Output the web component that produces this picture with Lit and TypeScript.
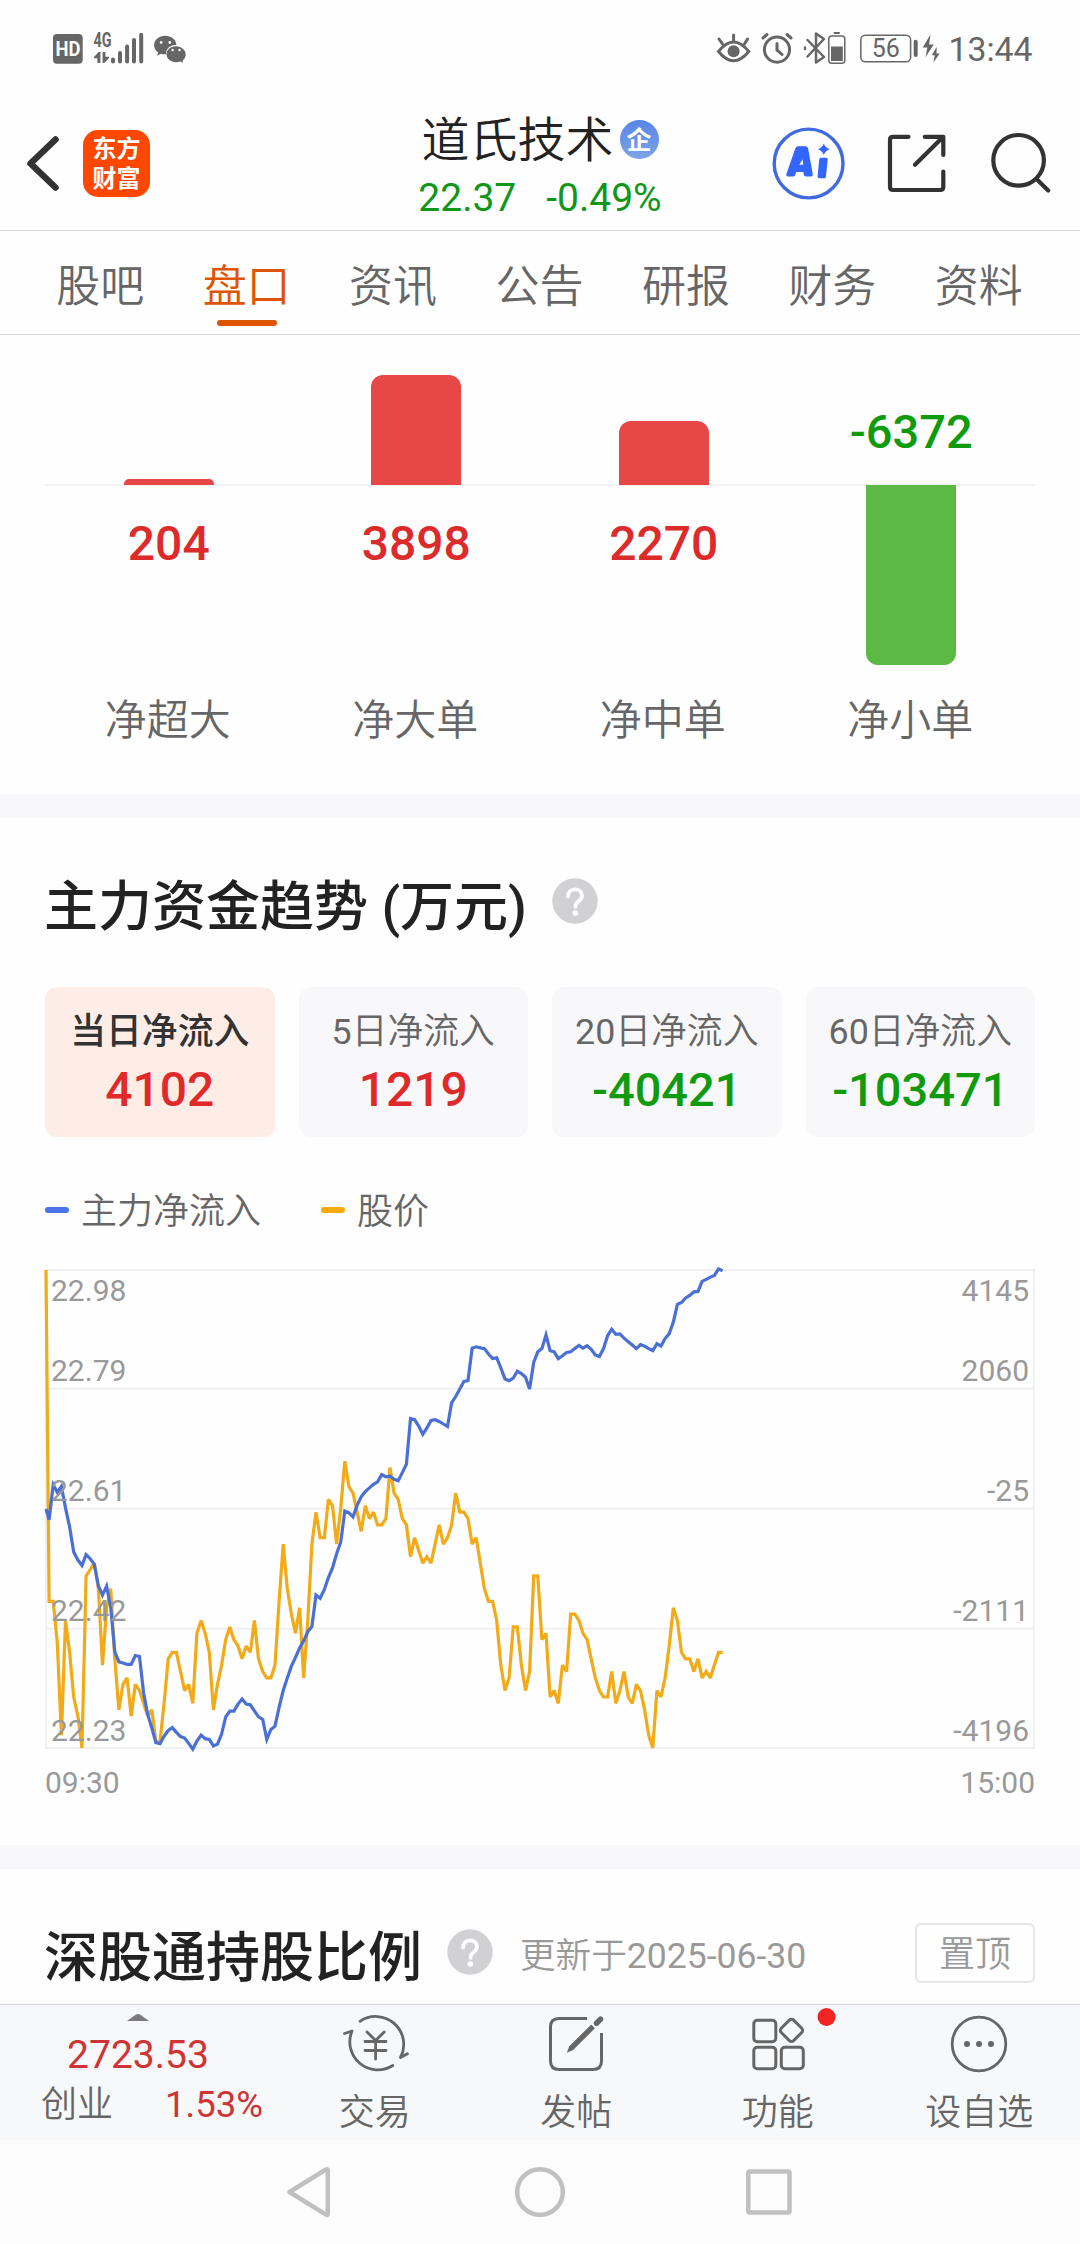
import { LitElement, html, css, svg } from "lit";
import { customElement } from "lit/decorators.js";

const tabs = ["股吧", "盘口", "资讯", "公告", "研报", "财务", "资料"];

const orders = [
  { label: "净超大", value: 204 },
  { label: "净大单", value: 3898 },
  { label: "净中单", value: 2270 },
  { label: "净小单", value: -6372 },
];
const ORDER_SCALE = 180 / 6372;

const periods = [
  { label: "当日净流入", value: 4102 },
  { label: "5日净流入", value: 1219 },
  { label: "20日净流入", value: -40421 },
  { label: "60日净流入", value: -103471 },
];

const axis = [
  { price: "22.98", flow: "4145" },
  { price: "22.79", flow: "2060" },
  { price: "22.61", flow: "-25" },
  { price: "22.42", flow: "-2111" },
  { price: "22.23", flow: "-4196" },
];

// Cents below the day's high of 22.98, one sample a minute.
const priceDrop = [
  0, 52, 52, 58.5, 73, 55, 60, 67, 70, 75, 48, 47, 46, 50, 62, 53, 50, 61, 69, 65, 64, 70, 65, 66, 68, 70, 69, 74, 74,
  68, 61, 60, 60, 63, 66, 65, 68, 57, 55, 57, 60, 69, 65, 62, 58, 56, 58, 59, 61, 59, 60, 55, 61, 63, 64, 64, 62, 52,
  43, 50, 54, 57, 53, 64, 55, 43, 38, 42, 42, 36, 37, 43, 37.5, 30, 34, 35, 38, 41, 37, 39, 38, 40, 40, 39, 31, 35, 36,
  39, 40, 45, 42, 44, 46, 45, 46, 43, 40, 43, 42, 40, 35, 38, 38, 39, 43, 42, 46, 50, 52, 52, 55, 62, 66, 64, 56, 56,
  62, 66, 63, 48, 48, 58, 57, 67, 66, 68, 62, 63, 54, 54, 55, 57, 58, 61, 64, 66, 67, 67, 63, 68, 66, 63, 67, 68, 65,
  66, 69, 73, 75, 66, 67, 64, 59, 53, 55, 60, 61, 61, 63, 61, 64, 63, 64, 62, 60, 60,
];

// Net inflow, in plot units between FLOW_TOP and FLOW_BOTTOM, one sample a minute.
const FLOW_TOP = 56;
const FLOW_BOTTOM = 1394;
const flow = [
  725, 755, 657, 678, 662, 722, 775, 845, 868, 883, 853, 864, 880, 940, 966, 941, 1000, 1125, 1153, 1156, 1160, 1160,
  1135, 1138, 1240, 1300, 1338, 1379, 1382, 1361, 1345, 1337, 1350, 1362, 1366, 1381, 1397, 1375, 1358, 1368, 1370,
  1388, 1383, 1355, 1307, 1291, 1291, 1271, 1257, 1271, 1273, 1290, 1307, 1314, 1370, 1342, 1333, 1280, 1233, 1198,
  1165, 1140, 1114, 1094, 1068, 1054, 966, 975, 951, 917, 890, 850, 818, 731, 736, 747, 715, 691, 676, 666, 656, 649,
  629, 635, 633, 642, 646, 623, 600, 472, 475, 493, 516, 498, 477, 475, 480, 487, 494, 428, 410, 389, 368, 366, 275,
  271, 274, 276, 291, 304, 302, 330, 361, 366, 359, 339, 346, 356, 389, 315, 285, 276, 238, 282, 285, 304, 296, 287,
  285, 276, 267, 275, 268, 278, 294, 298, 276, 240, 222, 236, 235, 247, 257, 266, 276, 265, 269, 276, 282, 262, 269,
  248, 234, 202, 152, 147, 134, 127, 117, 116, 88, 82, 76, 71, 53, 58,
];

const PLOT_H = 478;
const line = (values: number[], top: number, bottom: number) =>
  values
    .map((v, i) => {
      const x = Math.max(0, i * 4.1067 - 1) + 1;
      const y = ((v - top) / (bottom - top)) * PLOT_H + 1;
      return `${x.toFixed(1)},${y.toFixed(1)}`;
    })
    .join(" ");

const base = css`
  * {
    box-sizing: border-box;
  }
  svg {
    display: block;
    flex: none;
  }
`;

@customElement("status-bar")
class StatusBar extends LitElement {
  static styles = [
    base,
    css`
      :host {
        display: block;
        height: 100px;
      }
      .bar {
        display: flex;
        justify-content: space-between;
        height: 100px;
      }
      .glyph {
        font-family: Roboto, sans-serif;
        fill: #666;
      }
      .hd {
        font-family: Roboto, sans-serif;
        font-weight: 700;
        fill: #fff;
      }
    `,
  ];
  render() {
    return html`<div class="bar">
      <svg width="200" height="100" viewBox="0 0 200 100" fill="#666">
        <rect x="53" y="34" width="29.700" height="29.700" rx="4" />
        <text class="hd" x="55.500" y="56" font-size="20" textLength="25" lengthAdjust="spacingAndGlyphs">HD</text>
        <text class="glyph" x="93.500" y="46.700" font-weight="700" font-size="20" textLength="18" lengthAdjust="spacingAndGlyphs">4G</text>
        <path d="M100.400 52v11h-3v-4.800H94V57l4.600-5zM102.600 52h2.800v4.800h3.600v1.200l-4.600 5h-1.800z" />
        <g stroke="#666" stroke-width="4" stroke-linecap="round">
          <path d="M113 59.500v2M120 53v8.500M127.100 46.500v15M134 40v21.500M141.200 34.800v26.700" />
        </g>
        <path d="M165.300 35.800c6.200 0 11 4 11 9.300-5.800-.4-10.400 3.600-10.300 9.100-1.900.2-3.700.1-5.200-.4l-3.600 2 .9-3.300c-2.600-1.900-4-4.300-4-7.200 0-5.400 5-9.500 11.200-9.500z" />
        <path d="M176.100 46.300c5.400 0 9.600 3.700 9.600 8.200 0 2.500-1.300 4.700-3.200 6.200l.7 2.100-3-1.400c-1.200.5-2.700.8-4.100.8-5.400 0-9.600-3.500-9.600-7.900s4.200-8 9.600-8z" />
        <g fill="#fff">
          <circle cx="161.200" cy="42.500" r="1.400" /><circle cx="169.800" cy="42.500" r="1.400" />
          <circle cx="172.600" cy="50" r="1.200" /><circle cx="179.500" cy="50" r="1.200" />
        </g>
      </svg>
      <svg width="380" height="100" viewBox="700 0 380 100" fill="none" stroke="#666" stroke-linecap="round">
        <g stroke-width="3">
          <path d="M718.500 51.500q15-19 30.300 0q-15.300 18.500-30.300 0z" />
          <path d="M733.600 41v-6M722.500 44l-3.500-5M744.500 44l3-5" />
        </g>
        <circle cx="733.600" cy="51.300" r="6" fill="#666" stroke="none" />
        <circle cx="777" cy="49.600" r="12.600" stroke-width="3" />
        <path d="M777 43.500v6.500l5 4.500M763 38l4-3.500M791 38l-4-3.500" stroke-width="3" />
        <path d="M807.500 40l16.500 17-8 5.500V33.500l8 5.500-16.500 17.500M805 47.500v1.500" stroke-width="2.500" stroke-linejoin="round" />
        <rect x="828.800" y="36" width="16" height="27.300" rx="3" stroke-width="1.500" />
        <path d="M834.500 33h4.500" stroke-width="2" />
        <rect x="831" y="46.500" width="11.800" height="14.500" fill="#666" stroke="none" />
        <rect x="860.800" y="35.200" width="49.800" height="26.500" rx="4.500" stroke-width="1.500" />
        <path d="M915.700 41.800v13.200" stroke-width="4" />
        <path d="M930.500 34.500l-7.800 13h4.600l-1.800 9.500 8.300-12.500h-4.700zM936.700 47l-5 8.200h3l-1.200 7.200 6.200-9h-3.200z" fill="#666" stroke="none" />
        <text class="glyph" x="885.800" y="57" text-anchor="middle" font-size="25" stroke="none">56</text>
        <text class="glyph" x="948.500" y="61.300" font-size="34" stroke="none" textLength="84" lengthAdjust="spacingAndGlyphs">13:44</text>
      </svg>
    </div>`;
  }
}

@customElement("stock-header")
class StockHeader extends LitElement {
  static styles = [
    base,
    css`
      :host {
        display: block;
      }
      .bar {
        display: grid;
        grid-template-columns: 1fr auto 1fr;
        height: 131px;
        border-bottom: 1px solid #d3d3d3;
      }
      .left {
        display: flex;
        align-items: flex-start;
        padding: 30px 0 0 25px;
        gap: 21px;
      }
      .back {
        margin-top: 2px;
      }
      .logo {
        width: 67px;
        height: 67px;
        padding-top: 2px;
        border-radius: 15px;
        background: #fe4800;
        color: #fff;
        font-family: "Noto Sans CJK SC", sans-serif;
        font-size: 24px;
        font-weight: 700;
        line-height: 30px;
        text-align: center;
      }
      .mid {
        padding-top: 8px;
      }
      .name {
        display: flex;
        align-items: center;
        justify-content: center;
        gap: 6px;
        height: 56px;
        font-size: 48px;
        color: #222;
      }
      .badge {
        width: 39px;
        height: 39px;
        margin-top: 6px;
        border-radius: 50%;
        background: linear-gradient(#5985e6, #7ba4e8);
        color: #fff;
        font-family: "Noto Sans CJK SC", sans-serif;
        font-size: 25px;
        font-weight: 700;
        line-height: 37px;
        text-align: center;
      }
      .quote {
        display: flex;
        justify-content: center;
        gap: 30px;
        height: 60px;
        padding-top: 4px;
        font-size: 39px;
        line-height: 60px;
        color: #109618;
      }
      .right {
        display: flex;
        justify-content: flex-end;
      }
    `,
  ];
  render() {
    return html`<div class="bar">
      <div class="left">
        <svg class="back" width="37" height="62" viewBox="25 132 37 62" fill="none" stroke="#333" stroke-width="6.500" stroke-linecap="round" stroke-linejoin="round">
          <path d="M55.500 139.500L30.500 163.500L55.500 187.500" />
        </svg>
        <div class="logo">东方<br />财富</div>
      </div>
      <div class="mid">
        <div class="name"><span>道氏技术</span><span class="badge">企</span></div>
        <div class="quote"><span>22.37</span><span>-0.49%</span></div>
      </div>
      <div class="right">
        <svg width="320" height="128" viewBox="760 100 320 128" fill="none">
          <circle cx="808.600" cy="163.500" r="34.400" stroke="#4169e1" stroke-width="3.400" />
          <g fill="#3366ff">
            <path fill-rule="evenodd" d="M786.300 174.200l9-25.700q.8-2.300 3-2.300h7.200q2.200 0 2.600 2.300l4.700 25.700q.4 2.300-1.800 2.300h-5q-1.800 0-2.200-1.800l-.4-2.700h-7.200l-1.200 3.200q-.5 1.300-2.200 1.300h-5q-2 0-1.500-2.300zM799.300 164.800h4l-.8-5.500z" />
            <path d="M820.700 157.700h5.500q1.700 0 1.500 1.700l-1.800 17.300q-.2 1.600-1.800 1.600h-5q-1.700 0-1.500-1.700l1.600-17.200q.2-1.700 1.500-1.700z" />
            <path d="M823.800 143.500q1.600 4.200 5.700 5.800-4.100 1.600-5.700 5.800-1.600-4.200-5.700-5.800 4.100-1.600 5.700-5.800z" />
          </g>
          <g stroke="#333" stroke-width="4.200" stroke-linecap="round" stroke-linejoin="round">
            <path d="M908.500 136.800H893q-3 0-3 3V187q0 3 3 3h47.300q3 0 3-3V171.500" />
            <path d="M924.800 136.800h18.500V155M942 138L915 164.700" />
            <circle cx="1018.600" cy="160.300" r="25.300" />
            <path d="M1037.500 180l10.700 10.500" />
          </g>
        </svg>
      </div>
    </div>`;
  }
}

@customElement("section-tabs")
class SectionTabs extends LitElement {
  static styles = [
    base,
    css`
      :host {
        display: block;
      }
      .tabs {
        display: grid;
        grid-template-columns: repeat(7, 1fr);
        height: 104px;
        padding: 0 28px 0 27px;
        border-bottom: 1px solid #d3d3d3;
      }
      .tab {
        display: flex;
        flex-direction: column;
        align-items: center;
        padding-top: 24px;
        font-size: 44px;
        line-height: 64px;
        color: #666;
      }
      .tab.on {
        color: #dd5500;
      }
      .tab.on::after {
        content: "";
        width: 60px;
        height: 6px;
        margin-top: 1px;
        border-radius: 3px;
        background: #dd5500;
      }
    `,
  ];
  render() {
    return html`<div class="tabs">
      ${tabs.map((t) => html`<div class="tab ${t === "盘口" ? "on" : ""}">${t}</div>`)}
    </div>`;
  }
}

@customElement("order-bars")
class OrderBars extends LitElement {
  static styles = [
    base,
    css`
      :host {
        display: block;
      }
      .cols {
        display: grid;
        grid-template-columns: repeat(4, 1fr);
        height: 459px;
        padding: 0 45px;
      }
      .col {
        display: flex;
        flex-direction: column;
        align-items: center;
      }
      .up {
        display: flex;
        flex-direction: column;
        justify-content: flex-end;
        align-items: center;
        width: 100%;
        height: 151px;
        border-bottom: 2px solid #f2f2f2;
      }
      .down {
        display: flex;
        flex-direction: column;
        align-items: center;
        height: 205px;
      }
      .bar {
        width: 90px;
      }
      .bar.pos {
        margin-bottom: -1px;
        border-radius: 12px 12px 0 0;
        background: #e84748;
      }
      .bar.neg {
        margin-top: -1px;
        border-radius: 0 0 12px 12px;
        background: #5cb944;
      }
      .bar.tiny {
        border-radius: 5px 5px 0 0;
      }
      .num {
        font-size: 48px;
        font-weight: 500;
        line-height: 60px;
        color: #dd2b2b;
      }
      .down .num {
        margin-top: 28px;
      }
      .up .num {
        margin-bottom: 22px;
        font-size: 47px;
        color: #109b0d;
      }
      .label {
        margin-right: 2px;
        font-size: 42px;
        line-height: 60px;
        color: #666;
      }
    `,
  ];
  render() {
    return html`<div class="cols">
      ${orders.map((o) => {
        const h = Math.abs(o.value) * ORDER_SCALE;
        return html`<div class="col">
          <div class="up">
            ${o.value > 0
              ? html`<div class="bar pos ${h < 12 ? "tiny" : ""}" style="height:${h}px"></div>`
              : html`<div class="num">${o.value}</div>`}
          </div>
          <div class="down">
            ${o.value > 0
              ? html`<div class="num">${o.value}</div>`
              : html`<div class="bar neg" style="height:${h}px"></div>`}
          </div>
          <div class="label">${o.label}</div>
        </div>`;
      })}
    </div>`;
  }
}

@customElement("help-dot")
class HelpDot extends LitElement {
  static styles = [
    base,
    css`
      :host {
        display: block;
        flex: none;
      }
    `,
  ];
  render() {
    return html`<svg width="46" height="46" viewBox="0 0 46 46" fill="none">
      <circle cx="23" cy="23" r="22.700" fill="#d1d1d4" />
      <path d="M16 18.500c0-4.300 2.800-7.200 7-7.200s7 2.600 7 6.500c0 5-6.500 5.200-6.500 11" stroke="#fff" stroke-width="3.800" stroke-linecap="round" />
      <circle cx="23.300" cy="35" r="2.800" fill="#fff" />
    </svg>`;
  }
}

@customElement("trend-chart")
class TrendChart extends LitElement {
  static styles = [
    base,
    css`
      :host {
        display: block;
        color: #999;
        font-size: 30px;
        line-height: 40px;
      }
      .plot {
        position: relative;
        height: 480px;
      }
      .labels {
        position: absolute;
        inset: 0;
        display: flex;
        flex-direction: column;
        justify-content: space-between;
        padding: 2px 6px 0 6px;
      }
      .row {
        display: flex;
        justify-content: space-between;
      }
      .row.first {
        margin-bottom: -40px;
      }
      .rest {
        display: flex;
        flex-direction: column;
        gap: 80px;
        margin-bottom: -2px;
      }
      .times {
        display: flex;
        justify-content: space-between;
        padding-top: 14px;
      }
    `,
  ];
  render() {
    const [first, ...rest] = axis;
    const row = (a: { price: string; flow: string }, cls = "") =>
      html`<div class="row ${cls}"><span>${a.price}</span><span>${a.flow}</span></div>`;
    return html`<div class="plot">
        <svg width="990" height="480" viewBox="0 0 990 480" fill="none" overflow="visible">
          <rect x="1" y="1" width="988" height="478" stroke="#f0f0f0" stroke-width="2" />
          ${[119.7, 239.7, 359.7].map((y) => svg`<path d="M0 ${y}H990" stroke="#f0f0f0" stroke-width="2"/>`)}
          <polyline points=${line(priceDrop, 0, 75)} stroke="#f2aa18" stroke-width="3.200" stroke-miterlimit="2" />
          <polyline points=${line(flow, FLOW_TOP, FLOW_BOTTOM)} stroke="#4a70d6" stroke-width="3.200" />
        </svg>
        <div class="labels">
          ${row(first, "first")}
          <div class="rest">${rest.map((a) => row(a))}</div>
        </div>
      </div>
      <div class="times"><span>09:30</span><span>15:00</span></div>`;
  }
}

@customElement("bottom-bar")
class BottomBar extends LitElement {
  static styles = [
    base,
    css`
      :host {
        display: block;
      }
      .bar {
        display: grid;
        grid-template-columns: 274px repeat(4, 1fr);
        height: 136px;
        border-top: 1px solid #d0d0d8;
        background: #f7f8fa;
      }
      .index {
        display: flex;
        flex-direction: column;
        align-items: center;
        padding: 9px 0 0 2px;
        color: #cf3333;
      }
      .price {
        margin-top: 7px;
        font-size: 39px;
        line-height: 54px;
      }
      .line {
        display: flex;
        justify-content: space-between;
        width: 100%;
        padding: 0 11px 0 39px;
        font-size: 36.500px;
        line-height: 46px;
      }
      .market {
        font-size: 36px;
        color: #666;
      }
      .item {
        display: flex;
        flex-direction: column;
        align-items: center;
        font-size: 36px;
        line-height: 48px;
        color: #666;
      }
      .item span {
        margin-top: 4px;
      }
      .nav {
        height: 104px;
        background: #fcfcfc;
      }
    `,
  ];
  render() {
    return html`<div class="bar">
        <div class="index">
          <svg width="22" height="7" viewBox="0 0 22 7" fill="#7a7a7c"><path d="M0 7L9 .6q2-1.200 4 0L22 7z" /></svg>
          <div class="price">2723.53</div>
          <div class="line"><span class="market">创业</span><span>1.53%</span></div>
        </div>
        <div class="item">
          <svg width="90" height="80" viewBox="330 2005 90 80" fill="none" stroke="#666" stroke-width="2.800" stroke-linecap="round" stroke-linejoin="round">
            <path d="M360 2021.300A28 28 0 0 1 400.500 2057.500L407.500 2053.800" />
            <path d="M392.800 2065.500A28 28 0 0 1 352 2031L344.500 2033.500" />
            <path d="M367 2032l8.600 8.500 8.600-8.500M375.600 2041v18M365 2041.500h21M365 2050.500h21" />
          </svg>
          <span>交易</span>
        </div>
        <div class="item">
          <svg width="90" height="80" viewBox="532 2005 90 80" fill="none" stroke="#666" stroke-width="3">
            <path d="M588 2018.500H560q-8.500 0-8.500 8.500v34q0 8.500 8.500 8.500h34q8.500 0 8.500-8.500V2033" />
            <path d="M567.800 2052.800l2.500-6.500 22-21.800 3.600 3.800-21.800 21.800z" fill="#666" stroke="none" />
            <path d="M597.500 2023.200l4-4" stroke-width="5.500" stroke-linecap="round" />
          </svg>
          <span>发帖</span>
        </div>
        <div class="item">
          <svg width="120" height="80" viewBox="718 2005 120 80" fill="none" stroke="#666" stroke-width="3">
            <rect x="753.800" y="2020.200" width="22" height="21.500" rx="3.500" />
            <rect x="753.800" y="2047.200" width="22" height="21.500" rx="3.500" />
            <rect x="781.300" y="2047.200" width="22" height="21.500" rx="3.500" />
            <rect x="782.700" y="2021.700" width="17.500" height="17.500" rx="3" transform="rotate(45 791.500 2030.500)" />
            <circle cx="826.500" cy="2017" r="9" fill="#f22424" stroke="none" />
          </svg>
          <span>功能</span>
        </div>
        <div class="item">
          <svg width="90" height="80" viewBox="934 2005 90 80" fill="none" stroke="#666" stroke-width="2.800">
            <circle cx="979" cy="2044" r="26.800" />
            <g fill="#666" stroke="none">
              <circle cx="967" cy="2044" r="3" /><circle cx="979" cy="2044" r="3" /><circle cx="991" cy="2044" r="3" />
            </g>
          </svg>
          <span>设自选</span>
        </div>
      </div>
      <div class="nav">
        <svg width="1080" height="104" viewBox="0 2140 1080 104" fill="none" stroke="#c0c0c0" stroke-width="4.500" stroke-linejoin="round">
          <path d="M289.500 2192L326 2169.500q1.800-.8 1.800 1.200V2213.500q0 2-1.800 1.200z" />
          <circle cx="540" cy="2192" r="22.800" />
          <rect x="748.300" y="2171.500" width="41.200" height="41" rx="1.500" />
        </svg>
      </div>`;
  }
}

@customElement("app-root")
class AppRoot extends LitElement {
  static styles = [
    base,
    css`
      :host {
        display: flex;
        flex-direction: column;
        width: 1080px;
        height: 2244px;
        overflow: hidden;
        background: #fefefe;
        font-family: Roboto, "Noto Sans CJK SC DemiLight", "Noto Sans CJK SC", sans-serif;
        font-weight: 400;
      }
      .band {
        height: 24px;
        background: #f8f8fa;
      }
      .content {
        flex: 1;
        min-height: 0;
        overflow: hidden;
      }
      .trend {
        height: 1027px;
        padding: 46px 45px 0;
      }
      .heading {
        display: flex;
        align-items: center;
        height: 80px;
        font-size: 54px;
        line-height: 80px;
        color: #222;
        white-space: nowrap;
      }
      .title {
        margin: 7px 0 0 -1px;
        font-family: Roboto, "Noto Sans CJK SC", sans-serif;
        font-weight: 500;
      }
      .heading help-dot {
        margin: -6px 0 0 25px;
      }
      .cards {
        display: grid;
        grid-template-columns: repeat(4, 1fr);
        gap: 24px;
        margin-top: 43px;
      }
      .card {
        height: 150px;
        padding-top: 18px;
        border-radius: 12px;
        background: #f8f8fa;
        text-align: center;
        font-size: 35.800px;
        line-height: 54px;
        color: #666;
        white-space: nowrap;
      }
      .card.on {
        background: #feede6;
        color: #333;
        font-family: Roboto, "Noto Sans CJK SC", sans-serif;
        font-weight: 500;
      }
      .value {
        margin-top: 1px;
        font-size: 48px;
        font-weight: 500;
        line-height: 60px;
        color: #e02a2a;
      }
      .value.neg {
        font-size: 47px;
        color: #109b0d;
      }
      .legend {
        display: flex;
        align-items: center;
        gap: 60px;
        height: 54px;
        margin: 46px 0 32px;
        font-size: 36px;
        line-height: 54px;
        color: #666;
      }
      .key {
        display: flex;
        align-items: center;
        gap: 12px;
      }
      .name {
        margin-top: 3px;
      }
      .dash {
        width: 24px;
        height: 6px;
        border-radius: 3px;
        background: #4a74e8;
      }
      .dash.gold {
        background: #f8a90c;
      }
      .hold {
        display: flex;
        align-items: center;
        justify-content: space-between;
        padding: 46px 45px 0;
      }
      .updated {
        margin: 2px 0 0 27px;
        font-size: 35.600px;
        color: #999;
      }
      .pin {
        width: 120px;
        height: 60px;
        margin-top: -4px;
        border: 2px solid #e6e6e6;
        border-radius: 6px;
        font-size: 36px;
        line-height: 60px;
        text-align: center;
        color: #999;
      }
    `,
  ];
  render() {
    return html`
      <status-bar></status-bar>
      <stock-header></stock-header>
      <section-tabs></section-tabs>
      <div class="content">
        <order-bars></order-bars>
        <div class="band"></div>
        <div class="trend">
          <div class="heading"><span class="title">主力资金趋势 (万元)</span><help-dot></help-dot></div>
          <div class="cards">
            ${periods.map(
              (p, i) => html`<div class="card ${i === 0 ? "on" : ""}">
                <div>${p.label}</div>
                <div class="value ${p.value < 0 ? "neg" : ""}">${p.value}</div>
              </div>`
            )}
          </div>
          <div class="legend">
            <div class="key"><span class="dash"></span><span class="name">主力净流入</span></div>
            <div class="key"><span class="dash gold"></span><span class="name">股价</span></div>
          </div>
          <trend-chart></trend-chart>
        </div>
        <div class="band"></div>
        <div class="hold">
          <div class="heading">
            <span class="title">深股通持股比例</span><help-dot></help-dot><span class="updated">更新于2025-06-30</span>
          </div>
          <div class="pin">置顶</div>
        </div>
      </div>
      <bottom-bar></bottom-bar>
    `;
  }
}
